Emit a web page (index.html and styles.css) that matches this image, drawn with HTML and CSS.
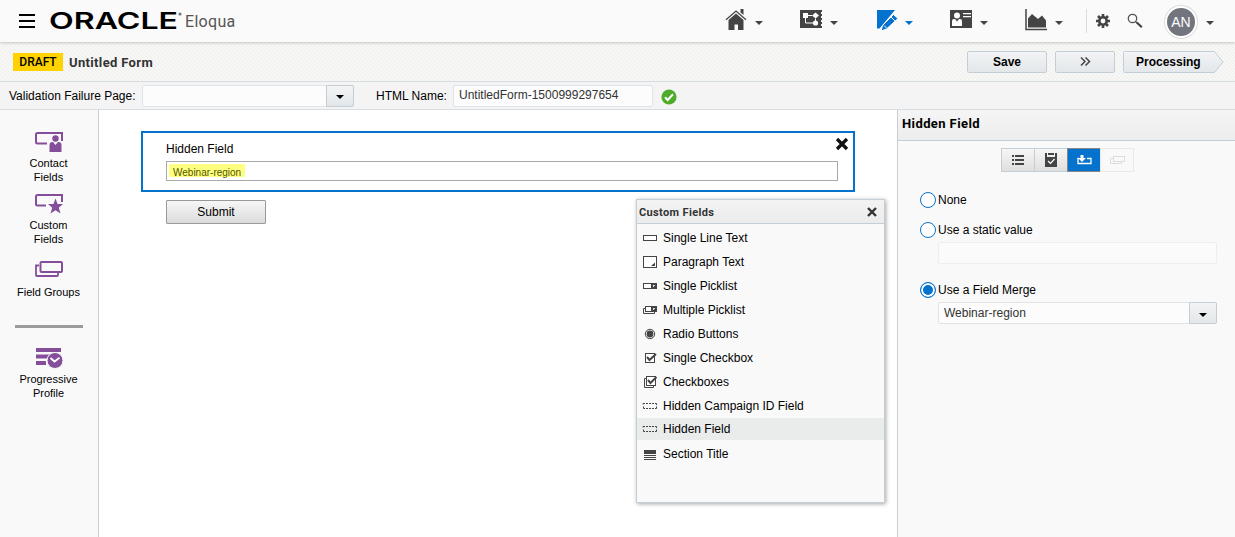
FILE: index.html
```html
<!DOCTYPE html>
<html lang="en">
<head>
  <meta charset="UTF-8">
  <title>Untitled Form</title>
  <link rel="stylesheet" href="styles.css">
</head>
<body>

<header class="topbar">
  <svg class="menu-icon" width="16" height="14"><path d="M0 1h16M0 7h16M0 13h16" stroke="#000" stroke-width="2"/></svg>
  <svg class="logo" width="133" height="24"><text x="-1" y="20" textLength="129" lengthAdjust="spacingAndGlyphs">ORACLE</text><circle cx="130" cy="5" r="1.600" fill="#777"/></svg>
  <span class="product">Eloqua</span>

  <nav class="nav">
    <a class="nav-item">
      <svg width="22" height="22" viewBox="0 0 22 22"><path d="M1 10.800L11 2l10 8.800" fill="none" stroke="#444" stroke-width="1.300"/><path d="M15.500 0h3v6l-3-2.500z" fill="#444"/><path d="M11 4.500l7.500 6.500v10H13v-5.500H9.500V21H3.500V11z" fill="#444"/></svg>
      <i class="caret"></i>
    </a>
    <a class="nav-item">
      <svg width="22" height="22" viewBox="0 0 22 22"><path d="M0 1h22v2h-1v2h1v2h-1v2h1v2h-1v2h1v2h-1v2h1v2H0z" fill="#444"/><path d="M3 4h5v5H3zM12 6.500L15.500 3.500 19 6.500l-3.500 3z" fill="#fff"/><path d="M8 6.500h4M5.500 9v5H13M15.500 9.500v3" fill="none" stroke="#fff" stroke-width="1"/><circle cx="15.500" cy="14" r="2.600" fill="#fff"/></svg>
      <i class="caret"></i>
    </a>
    <a class="nav-item active">
      <svg class="pencil" width="22" height="22" viewBox="0 0 22 22"><path d="M1 1h18L3.500 19.500H1z" fill="#0572ce"/><path d="M17.500 5.500l4.500 4L10.500 20l-5.500 2 1.500-5.500z" fill="#0572ce" stroke="#fff" stroke-width="1"/><path d="M8 16.500l2.500 2.500M15 8l4 4" stroke="#fff" stroke-width="1"/></svg>
      <i class="caret"></i>
    </a>
    <a class="nav-item">
      <svg width="22" height="22" viewBox="0 0 22 22"><path d="M0 1h22v18H0z" fill="#444"/><circle cx="7" cy="6.500" r="3" fill="#fff"/><path d="M2 17v-5q0-2 2-2h1l2 2.500L9 10h1q2 0 2 2v5zM13 4h8v1.200h-8zM13 7h8v1.200h-8z" fill="#fff"/></svg>
      <i class="caret"></i>
    </a>
    <a class="nav-item">
      <svg width="22" height="22" viewBox="0 0 22 22"><path d="M1 0v20.500h21" fill="none" stroke="#444" stroke-width="1.500"/><path d="M3 18.500v-9L7 5l6 5 4-3.500 4 5v7z" fill="#444"/></svg>
      <i class="caret"></i>
    </a>
    <span class="divider"></span>
    <svg class="gear" width="14" height="14" viewBox="0 0 14 14"><circle cx="7" cy="7" r="3.700" fill="none" stroke="#444" stroke-width="2.600"/><path d="M7 0v3M7 11v3M0 7h3M11 7h3M2 2l2 2M10 10l2 2M12 2l-2 2M4 10l-2 2" stroke="#444" stroke-width="2.600"/></svg>
    <svg class="search" width="16" height="16" viewBox="0 0 16 16"><circle cx="5.500" cy="5.500" r="4.200" fill="none" stroke="#555" stroke-width="1.300"/><path d="M8.500 8.500l1.500 1.500" stroke="#555" stroke-width="1.300"/><path d="M9.800 9.500l5 4.800" stroke="#444" stroke-width="2.200"/></svg>
    <span class="avatar">AN</span>
    <i class="caret"></i>
  </nav>
</header>

<div class="titlebar">
  <span class="badge">DRAFT</span>
  <span class="form-title">Untitled Form</span>
  <div class="actions">
    <button class="btn save">Save</button>
    <button class="btn more"><svg width="11" height="9"><path d="M1 .5l4 4-4 4M5.500.5l4 4-4 4" fill="none" stroke="#444" stroke-width="1.500"/></svg></button>
    <div class="processing">
      <svg width="101" height="22"><defs><linearGradient id="steel" x2="0" y2="1"><stop offset="0" stop-color="#f2f4f5"/><stop offset="1" stop-color="#e3e7ea"/></linearGradient></defs><path d="M.5 1.500q0-1 1-1h90l8.500 10.500-8.500 10.500h-90q-1 0-1-1z" fill="url(#steel)" stroke="#c4ced7"/></svg>
      <span>Processing</span>
    </div>
  </div>
</div>

<div class="settings">
  <label class="validation-label">Validation Failure Page:</label>
  <div class="select page-select"><span></span><b><i class="caret"></i></b></div>
  <label class="html-label">HTML Name:</label>
  <div class="html-name"><span>UntitledForm-1500999297654</span></div>
  <svg class="ok" width="16" height="16"><circle cx="8" cy="8" r="7.600" fill="#4fac2a"/><path d="M4 8.300l2.700 2.700L12 5.300" fill="none" stroke="#fff" stroke-width="2"/></svg>
</div>

<div class="workspace">
  <aside class="sidebar">
    <div class="tool contact">
      <svg width="30" height="22" viewBox="0 0 30 22"><path d="M13 11.500H3.500Q2 11.500 2 10V2.500Q2 1 3.500 1H28v8" fill="none" stroke="#854e9b" stroke-width="2"/><circle cx="21.500" cy="6.500" r="3.200" fill="#854e9b"/><path d="M15.500 20v-7q0-3 3-3h.500l2.500 3 2.500-3h.500q3 0 3 3v7z" fill="#854e9b"/></svg>
      <span>Contact<br>Fields</span>
    </div>
    <div class="tool custom">
      <svg width="30" height="22" viewBox="0 0 30 22"><path d="M12 11.500H3.500Q2 11.500 2 10V2.500Q2 1 3.500 1H28v7" fill="none" stroke="#854e9b" stroke-width="2"/><path d="M21.500 4.500l2.100 5.500h5.400l-4.200 3.800 1.700 5.700-5-3.200-5 3.200 1.700-5.700L14 10h5.400z" fill="#854e9b"/></svg>
      <span>Custom<br>Fields</span>
    </div>
    <div class="tool groups">
      <svg width="30" height="18" viewBox="0 0 30 18"><rect x="6.500" y="2" width="21.500" height="10" rx="1" fill="none" stroke="#854e9b" stroke-width="2"/><path d="M5 5.500H2V15q0 1 1 1h20q1 0 1-1v-2" fill="none" stroke="#854e9b" stroke-width="1.800"/></svg>
      <span>Field Groups</span>
    </div>
    <hr>
    <div class="tool progressive">
      <svg width="30" height="22" viewBox="0 0 30 22"><path d="M2 0h25v4H2zM2 6.500h14v4H2zM2 13h10v4H2z" fill="#854e9b"/><circle cx="21" cy="12.500" r="8" fill="#854e9b" stroke="#f9f9f9" stroke-width="1"/><path d="M16.500 10l4 3.500 5-3.800" fill="none" stroke="#fff" stroke-width="1.800"/></svg>
      <span>Progressive<br>Profile</span>
    </div>
  </aside>

  <main class="canvas">
    <section class="field">
      <label>Hidden Field</label>
      <div class="field-input"><mark>Webinar-region</mark></div>
      <svg class="remove" width="14" height="14"><path d="M2 2l10 10M12 2L2 12" stroke="#111" stroke-width="3.200"/></svg>
    </section>
    <button class="submit">Submit</button>

    <div class="palette">
      <div class="palette-head"><span>Custom Fields</span><svg width="10" height="10"><path d="M1 1l8 8M9 1L1 9" stroke="#333" stroke-width="2.400"/></svg></div>
      <ul>
        <li><svg width="16" height="16"><rect x="1.500" y="5.500" width="13" height="5" fill="#fff" stroke="#444"/></svg>Single Line Text</li>
        <li><svg width="16" height="16"><rect x="1.500" y="2.500" width="13" height="11" fill="#fff" stroke="#444"/><path d="M13 8.500V12H9z" fill="#444"/></svg>Paragraph Text</li>
        <li><svg width="16" height="16"><rect x="1.500" y="5.500" width="13" height="5" fill="#fff" stroke="#444"/><path d="M9 5h6v6H9z" fill="#444"/><path d="M11 7h2v1h-1v1h-1z" fill="#ddd"/></svg>Single Picklist</li>
        <li><svg width="16" height="16"><path d="M3 6.500H1.500v5h11V10" fill="none" stroke="#444"/><rect x="3.500" y="4.500" width="11" height="5" fill="#fff" stroke="#444"/><path d="M9 4h6v6H9z" fill="#444"/><path d="M11 6h2v1h-1v1h-1z" fill="#ddd"/></svg>Multiple Picklist</li>
        <li><svg width="16" height="16"><circle cx="8" cy="8" r="4.700" fill="none" stroke="#444"/><circle cx="8" cy="8" r="3.400" fill="#444"/></svg>Radio Buttons</li>
        <li><svg width="16" height="16"><rect x="3.500" y="3.500" width="9" height="9" fill="#fff" stroke="#444"/><path d="M5 7l2.500 3L14 4" fill="none" stroke="#444" stroke-width="2"/></svg>Single Checkbox</li>
        <li><svg width="16" height="16"><path d="M4 4.500H2.500v9h9V12" fill="none" stroke="#444"/><rect x="4.500" y="2.500" width="9" height="9" fill="#fff" stroke="#444"/><path d="M6 6l2.500 3L14.500 3" fill="none" stroke="#444" stroke-width="2"/></svg>Checkboxes</li>
        <li><svg width="16" height="16"><path d="M1 6.500V5.500h2M4 5.500h2M7 5.500h2M10 5.500h2M13 5.500h1.500V7M14.500 8.500V10.500H13M12 10.500h-2M9 10.500H7M6 10.500H4M3 10.500H1.500V8.500" fill="none" stroke="#444"/></svg>Hidden Campaign ID Field</li>
        <li class="selected"><svg width="16" height="16"><path d="M1 6.500V5.500h2M4 5.500h2M7 5.500h2M10 5.500h2M13 5.500h1.500V7M14.500 8.500V10.500H13M12 10.500h-2M9 10.500H7M6 10.500H4M3 10.500H1.500V8.500" fill="none" stroke="#444"/></svg>Hidden Field</li>
        <li class="section"><svg width="16" height="16"><path d="M2 4h12v4H2zM2 9h12v1H2zM2 11h12v1H2zM2 13h12v1H2z" fill="#444"/></svg>Section Title</li>
      </ul>
    </div>
  </main>

  <aside class="properties">
    <h2>Hidden Field</h2>
    <div class="tabs">
      <b><svg width="12" height="10"><path d="M0 0h2v2H0zM3 0h9v2H3zM0 4h2v2H0zM3 4h9v2H3zM0 8h2v2H0zM3 8h9v2H3z" fill="#444"/></svg></b>
      <b><svg width="12" height="15"><path d="M0 0h2v4h8V0h2v14H0z" fill="#444"/><path d="M3 0h6v2H3z" fill="#444"/><path d="M3 8l2.500 2.500L9.500 6" fill="none" stroke="#fff" stroke-width="1.200"/></svg></b>
      <b class="on"><svg width="15" height="10"><path d="M2 3.500H1v5h13v-5H10" fill="none" stroke="#fff" stroke-width="1.300"/><path d="M3.500 0h3v3H9L5 7 1 3h2.500z" fill="#fff"/></svg></b>
      <b class="off"><svg width="15" height="10"><path d="M3 3.500H.5v5h11V7" fill="none" stroke="#ddd"/><rect x="3.500" y="1.500" width="11" height="5" fill="none" stroke="#ddd"/></svg></b>
    </div>
    <div class="option"><i class="radio"></i>None</div>
    <div class="option static"><i class="radio"></i>Use a static value</div>
    <div class="static-value"></div>
    <div class="option merge"><i class="radio checked"></i>Use a Field Merge</div>
    <div class="select merge-select"><span>Webinar-region</span><b><i class="caret"></i></b></div>
  </aside>
</div>

</body>
</html>
```
FILE: styles.css
```css
* { box-sizing: border-box; }
body { margin: 0; width: 1235px; height: 537px; overflow: hidden; display: flex; flex-direction: column; font: 12px "Liberation Sans", Arial, sans-serif; color: #000; background: #fff; }
svg { display: block; flex: none; }
button { font-family: inherit; padding: 0; }

.caret { width: 0; height: 0; border: 4px solid transparent; border-top-color: #444; border-bottom: 0; }

/* top navigation */
.topbar { height: 42px; flex: none; display: flex; align-items: center; background: #fafafa; padding-left: 19px; z-index: 1; box-shadow: 0 1px 3px rgba(0,0,0,0.2); }
.logo { margin: 0 0 0 15px; overflow: visible; }
.logo text { font: 600 23px Inter, sans-serif; fill: #000; }
.product { font: 16px Roboto, sans-serif; color: #555; margin: 0 0 0 2px; letter-spacing: 0.3px; }
.nav { width: 510px; height: 42px; margin-left: auto; display: flex; align-items: center; }
.nav-item { width: 75px; flex: none; display: flex; align-items: center; gap: 8px; }
.nav-item svg { margin-bottom: 3px; }
.nav-item .caret { margin-top: 3px; }
.nav-item .pencil { margin: 0 -1px 2px 1px; }
.active .caret { border-top-color: #0572ce; }
.divider { width: 1px; height: 24px; background: #d6dde3; margin-left: -14px; }
.gear { margin-left: 9px; }
.search { margin: 0 22px 0 17px; }
.avatar { width: 32px; height: 32px; border-radius: 50%; border: 2px solid #fff; box-shadow: 0 0 0 1px #ddd; background: #73757e; color: #fff; font: 14px/29px "Liberation Sans", Arial, sans-serif; text-align: center; margin: 2px 9px 0 0; }
.avatar + .caret { margin-top: 3px; }

/* title row */
.titlebar { height: 40px; flex: none; display: flex; align-items: center; padding: 0 11px 0 13px; background: repeating-linear-gradient(45deg, #f8f8f7 0, #f8f8f7 1.414px, #f1f1ef 1.414px, #f1f1ef 2.828px); border-bottom: 1px solid #d6dde3; }
.badge { width: 50px; height: 18px; background: #ffd200; font: 500 12px/19px Roboto, sans-serif; text-align: center; }
.form-title { margin: 1px 0 0 6px; font: 700 13px Roboto, sans-serif; color: #333; letter-spacing: 0.35px; }
.actions { margin-left: auto; display: flex; gap: 8px; }
.btn { height: 22px; border: 1px solid #c4ced7; border-radius: 2px; background: linear-gradient(#f2f4f5, #e3e7ea); font-weight: bold; font-size: 12px; display: flex; align-items: center; justify-content: center; color: #000; }
.save { width: 80px; }
.more { width: 60px; }
.processing { display: grid; font-weight: bold; }
.processing svg, .processing span { grid-area: 1 / 1; }
.processing span { padding-left: 13px; line-height: 22px; }

/* form settings */
.settings { height: 28px; flex: none; display: flex; align-items: center; padding-left: 9px; background: #f4f4f4; border-bottom: 1px solid #d6dde3; }
.validation-label { width: 133px; }
.select { display: flex; height: 22px; border: 1px solid #dfe4e7; border-radius: 2px; background: #fcfcfc; color: #333; }
.select span { flex: 1; padding-left: 5px; line-height: 20px; }
.select b { width: 28px; margin: -1px; border: 1px solid #c4ced7; border-radius: 0 2px 2px 0; background: linear-gradient(#f2f4f5, #e3e7ea); display: flex; align-items: center; justify-content: center; }
.select .caret { border-top-color: #000; margin-top: 3px; }
.page-select { width: 212px; }
.html-label { margin-left: 22px; width: 77px; }
.html-name { width: 200px; height: 22px; border: 1px solid #dfe4e7; border-radius: 2px; background: #fcfcfc; padding-left: 5px; line-height: 19px; color: #333; }
.ok { margin: 2px 0 0 8px; }

.workspace { flex: 1; display: flex; min-height: 0; }

/* field tools */
.sidebar { width: 99px; flex: none; background: #f9f9f9; border-right: 1px solid #c4ced7; padding: 22px 1px 0 0; }
.tool { display: flex; flex-direction: column; align-items: center; text-align: center; font-size: 11px; line-height: 14px; }
.contact, .custom { height: 62px; }
.contact span, .custom span { margin-top: 2px; }
.groups { height: 55px; padding-top: 4px; }
.groups span { margin-top: 7px; }
.sidebar hr { width: 68px; height: 3px; border: 0; background: #9b9b9b; margin: 14px 0 20px 15px; }
.progressive span { margin-top: 2px; }

/* form canvas */
.canvas { flex: 1; position: relative; padding: 21px 42px; }
.field { position: relative; width: 714px; height: 61px; border: 2px solid #0572ce; padding: 9px 15px 0 23px; }
.field label { display: block; line-height: 14px; }
.field-input { height: 20px; margin-top: 5px; border: 1px solid #a9a9a9; padding: 2px; }
.field mark { display: block; width: 76px; height: 13px; background: #ffff80; color: #555500; font-size: 10px; line-height: 17px; padding-left: 4px; white-space: nowrap; }
.remove { position: absolute; right: 4px; top: 4px; }
.submit { display: block; width: 100px; height: 24px; margin: 8px 0 0 25px; border: 1px solid #999; border-radius: 1px; background: linear-gradient(#f6f6f6, #dcdcdc); font-size: 12px; color: #000; }

/* floating list of custom fields */
.palette { position: absolute; left: 537px; top: 89px; width: 249px; height: 304px; background: #f9f9f9; border: 1px solid #c4ced7; box-shadow: 1px 1px 4px rgba(0,0,0,0.35); }
.palette-head { height: 24px; display: flex; align-items: center; justify-content: space-between; padding: 1px 7px 0 2px; background: linear-gradient(#f3f3f3, #ececec); border-bottom: 1px solid #c4ced7; font: 700 11px Roboto, sans-serif; color: #333; letter-spacing: 0.35px; }
.palette ul { list-style: none; margin: 2px 0 0; padding: 0; }
.palette li { height: 24px; padding-left: 5px; display: flex; align-items: center; gap: 5px; }
.palette .selected { height: 22px; background: #eaecec; }
.palette .section { margin-top: 2px; }

/* field properties */
.properties { width: 338px; flex: none; background: #f9f9f9; border-left: 1px solid #c4ced7; }
.properties h2 { margin: 0; height: 31px; padding-left: 4px; background: linear-gradient(#f5f5f5, #ededed); border-bottom: 1px solid #c4ced7; font: 700 13px/27px Roboto, sans-serif; letter-spacing: 0.4px; }
.tabs { display: flex; margin: 7px 0 0 103px; }
.tabs b { width: 34px; height: 24px; margin-right: -1px; border: 1px solid #c4ced7; background: linear-gradient(#f6f6f6, #dfdfdf); display: flex; align-items: center; justify-content: center; }
.tabs .on { background: #0572ce; border-color: #888; }
.tabs .off { background: #f9f9f9; border-color: #e6e9eb; }
.option { display: flex; align-items: center; height: 16px; gap: 2px; margin: 20px 0 0 22px; }
.option.static { margin-top: 14px; }
.option.merge { margin-top: 18px; }
.radio { width: 16px; height: 16px; border: 1px solid #0572ce; border-radius: 50%; background: #fff; }
.checked { background: #0572ce; box-shadow: inset 0 0 0 2px #fff; }
.static-value { width: 279px; height: 22px; margin: 4px 0 0 40px; border: 1px solid #eee; border-radius: 2px; background: #fbfbfb; }
.merge-select { width: 279px; margin: 4px 0 0 40px; }
```
